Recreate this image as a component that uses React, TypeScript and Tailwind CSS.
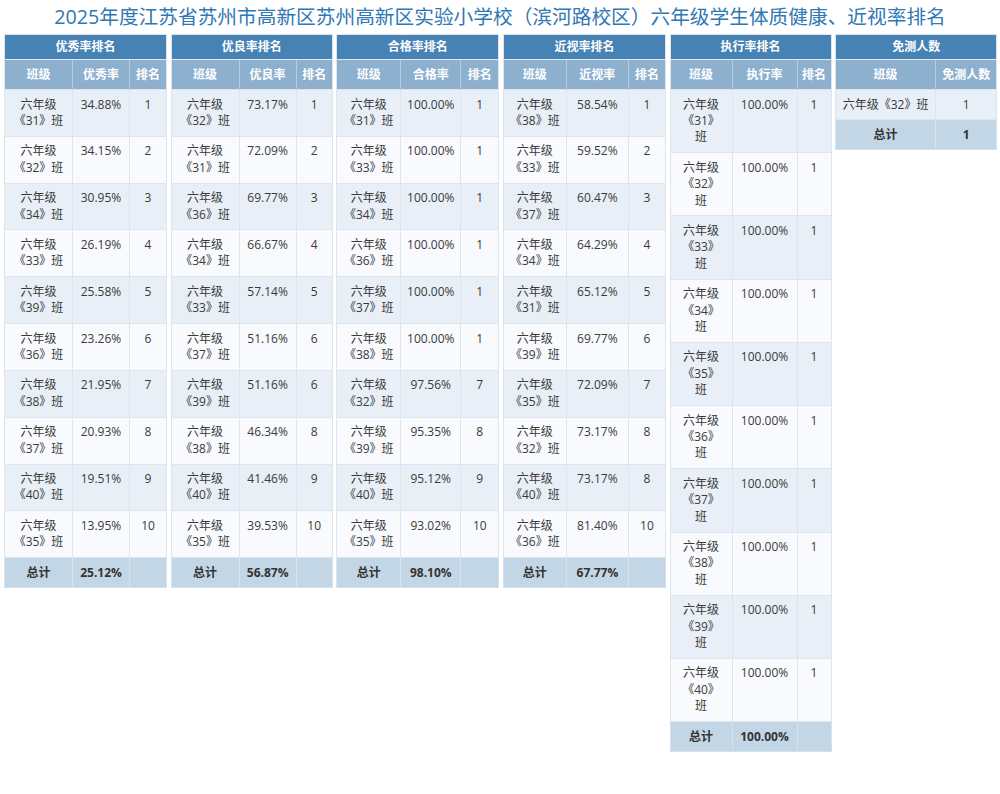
import React from "react";

type T = {
  title: string;
  widths: number[];
  heads: string[];
  rows: string[][];
  total: string[];
  wide?: boolean;
};

const cls = (n: string) => `六年级《${n}》班`;

const tables: T[] = [
  {
    title: "优秀率排名",
    widths: [68, 57, 37],
    heads: ["班级", "优秀率", "排名"],
    rows: [
      ["31", "34.88%", "1"],
      ["32", "34.15%", "2"],
      ["34", "30.95%", "3"],
      ["33", "26.19%", "4"],
      ["39", "25.58%", "5"],
      ["36", "23.26%", "6"],
      ["38", "21.95%", "7"],
      ["37", "20.93%", "8"],
      ["40", "19.51%", "9"],
      ["35", "13.95%", "10"],
    ].map((r) => [cls(r[0]), r[1], r[2]]),
    total: ["总计", "25.12%", ""],
  },
  {
    title: "优良率排名",
    widths: [68, 57, 36],
    heads: ["班级", "优良率", "排名"],
    rows: [
      ["32", "73.17%", "1"],
      ["31", "72.09%", "2"],
      ["36", "69.77%", "3"],
      ["34", "66.67%", "4"],
      ["33", "57.14%", "5"],
      ["37", "51.16%", "6"],
      ["39", "51.16%", "6"],
      ["38", "46.34%", "8"],
      ["40", "41.46%", "9"],
      ["35", "39.53%", "10"],
    ].map((r) => [cls(r[0]), r[1], r[2]]),
    total: ["总计", "56.87%", ""],
  },
  {
    title: "合格率排名",
    widths: [64, 60, 38],
    heads: ["班级", "合格率", "排名"],
    rows: [
      ["31", "100.00%", "1"],
      ["33", "100.00%", "1"],
      ["34", "100.00%", "1"],
      ["36", "100.00%", "1"],
      ["37", "100.00%", "1"],
      ["38", "100.00%", "1"],
      ["32", "97.56%", "7"],
      ["39", "95.35%", "8"],
      ["40", "95.12%", "9"],
      ["35", "93.02%", "10"],
    ].map((r) => [cls(r[0]), r[1], r[2]]),
    total: ["总计", "98.10%", ""],
  },
  {
    title: "近视率排名",
    widths: [63, 62, 37],
    heads: ["班级", "近视率", "排名"],
    rows: [
      ["38", "58.54%", "1"],
      ["33", "59.52%", "2"],
      ["37", "60.47%", "3"],
      ["34", "64.29%", "4"],
      ["31", "65.12%", "5"],
      ["39", "69.77%", "6"],
      ["35", "72.09%", "7"],
      ["32", "73.17%", "8"],
      ["40", "73.17%", "8"],
      ["36", "81.40%", "10"],
    ].map((r) => [cls(r[0]), r[1], r[2]]),
    total: ["总计", "67.77%", ""],
  },
  {
    title: "执行率排名",
    widths: [62, 65, 34],
    heads: ["班级", "执行率", "排名"],
    rows: ["31", "32", "33", "34", "35", "36", "37", "38", "39", "40"].map((n) => [
      cls(n),
      "100.00%",
      "1",
    ]),
    total: ["总计", "100.00%", ""],
    wide: true,
  },
  {
    title: "免测人数",
    widths: [100, 61],
    heads: ["班级", "免测人数"],
    rows: [[cls("32"), "1"]],
    total: ["总计", "1"],
  },
];

function RankTable({ t }: { t: T }) {
  const total = t.widths.reduce((a, b) => a + b, 0);
  return (
    <table
      className="table-fixed border-collapse border border-[#dfe5ec] text-[12px] text-[#3a3a3a]"
      style={{ width: total }}
    >
      <colgroup>
        {t.widths.map((w, i) => (
          <col key={i} style={{ width: w }} />
        ))}
      </colgroup>
      <thead>
        <tr className="h-[25px] bg-[#4682b4]">
          <th
            colSpan={t.widths.length}
            className="border-b border-[#dfe8f1] text-center font-bold text-white leading-[16px]"
          >
            {t.title}
          </th>
        </tr>
        <tr className="h-[30px] bg-[#8db0cf]">
          {t.heads.map((h, i) => (
            <th
              key={i}
              className="border-l border-[#b7cde1] first:border-l-0 text-center font-bold text-white leading-[16px]"
            >
              {h}
            </th>
          ))}
        </tr>
      </thead>
      <tbody>
        {t.rows.map((r, ri) => (
          <tr key={ri} className={ri % 2 === 0 ? "bg-[#e9eff7]" : "bg-[#f8fafd]"}>
            {r.map((c, ci) => (
              <td
                key={ci}
                className={`border border-[#dfe5ec] ${
                  t.wide && ci === 0 ? "px-[8px]" : "px-[4px]"
                } pt-[6.5px] pb-[6.5px] text-center align-top leading-[16.4px]`}
              >
                {c}
              </td>
            ))}
          </tr>
        ))}
        <tr className="h-[30px] bg-[#c3d6e6]">
          {t.total.map((c, ci) => (
            <td
              key={ci}
              className="border border-[#d6e1eb] text-center align-middle font-bold text-[#333]"
            >
              {c}
            </td>
          ))}
        </tr>
      </tbody>
    </table>
  );
}

export default function App() {
  return (
    <div
      className="min-h-[794px] w-[1000px] bg-white"
      style={{ fontFamily: '"Open Sans", "Noto Sans CJK SC", sans-serif' }}
    >
      <div className="flex h-[34px] items-center justify-center text-[19.7px] text-[#2f78b3]">
        2025年度江苏省苏州市高新区苏州高新区实验小学校（滨河路校区）六年级学生体质健康、近视率排名
      </div>
      <div className="flex items-start gap-[3.6px] pl-[4px]">
        {tables.map((t, i) => (
          <RankTable key={i} t={t} />
        ))}
      </div>
    </div>
  );
}
